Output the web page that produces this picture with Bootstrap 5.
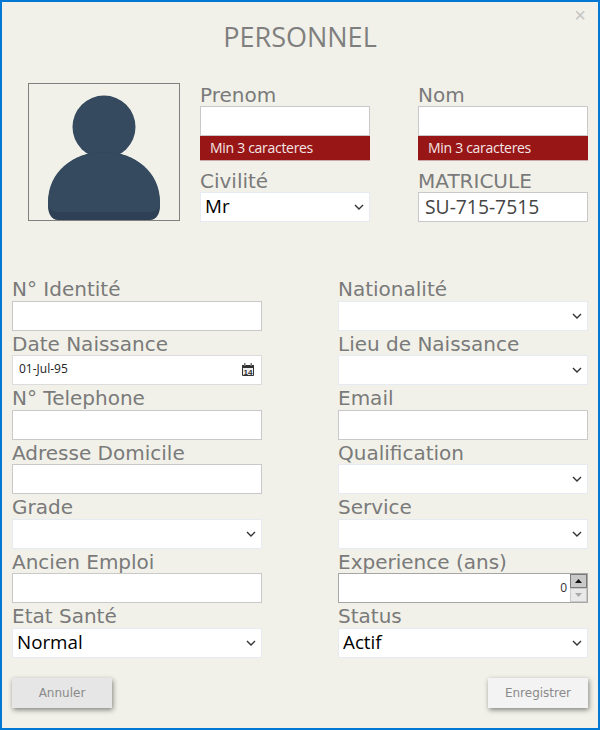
<!DOCTYPE html>
<html lang="fr">
<head>
    <meta charset="UTF-8">
    <title>Personnel</title>
    <link href="https://cdn.jsdelivr.net/npm/bootstrap@5.3.0/dist/css/bootstrap.min.css" rel="stylesheet">
    <style>
        html, body {
          height: 100%;
          background-color: #f1f1e9;
        }

        .fiche {
          height: 730px;
          border: 2px solid #0078d4;
          background-color: #f1f1e9;
          padding: 0 10px;
        }

        .fiche-head {
          height: 79.5px;
          position: relative;
        }

        .fiche-titre {
          font: 400 27px/70px "Open Sans", sans-serif;
          color: #7f7f7f;
          text-align: center;
          margin: 0;
        }

        .fiche-close {
          position: absolute;
          right: 2px;
          top: 6px;
          border: 0;
          background: none;
          padding: 0;
          font: 400 20px/14px "Liberation Sans", sans-serif;
          color: #c4c4c4;
        }

        .photo-box {
          width: 152px;
          height: 138px;
          margin: 1.5px 20px 0 16px;
          border: 1px solid #808080;
          flex: none;
        }

        .champ-top {
          width: 170px;
        }

        .champ-label {
          display: block;
          height: 24.5px;
          font: 400 20px/27.5px "DejaVu Sans", sans-serif;
          color: #7a7a7a;
          margin: 0;
          white-space: nowrap;
        }

        .champ-input.form-control {
          height: 30px;
          border-radius: 0;
          border: 1px solid #c9c9c9;
          background-color: #fff;
          padding: 0 6px 2px;
          font: 400 19.3px/26px "Open Sans", sans-serif;
          color: #444;
        }

        .champ-select.form-select {
          height: 30px;
          border-radius: 0;
          border: 1px solid #e6ebf2;
          padding: 0 24px 2px 4px;
          font: 400 18.8px/26px "Open Sans", sans-serif;
          color: #000;
          background-position: right 5px center;
          background-size: 10px 6px;
          background-image: url("data:image/svg+xml,%3csvg xmlns='http://www.w3.org/2000/svg' viewBox='0 0 10 6'%3e%3cpath fill='none' stroke='%23333' stroke-width='1.4' d='M1 1l4 4 4-4'/%3e%3c/svg%3e");
        }

        .msg-erreur {
          height: 25px;
          background-color: #981616;
          border-bottom: 1px solid #c9a9a9;
          color: #f3e6e6;
          font: 400 14px/24px "Open Sans", sans-serif;
          letter-spacing: -0.3px;
          padding-left: 10px;
          margin-bottom: 6.5px;
        }

        .fiche-grille {
          margin-top: 54.4px;
        }

        .colonne {
          width: 250px;
        }

        .date-champ,
        .spin-champ {
          position: relative;
        }

        .date-champ .champ-input.form-control {
          font-size: 12px;
          line-height: 24px;
          padding: 0 6px 4px;
          color: #222;
          border-color: #dcdcdc;
        }

        .date-icone {
          position: absolute;
          right: 8px;
          top: 8px;
        }

        .date-num {
          font: 700 8px "Liberation Sans", sans-serif;
          fill: #333;
        }

        .spin-champ .champ-input.form-control {
          border-color: #a6a6a6;
          text-align: right;
          padding-right: 20px;
          font-size: 12px;
          color: #333;
        }

        .spin-btn {
          position: absolute;
          right: 1px;
          width: 17px;
          height: 14px;
          padding: 0;
          display: flex;
          align-items: center;
          justify-content: center;
        }

        .spin-haut {
          top: 1px;
          background-color: #c9c9c9;
          border: 1px solid #7a7a7a;
        }

        .spin-bas {
          top: 15px;
          background-color: #e9e9e9;
          border: 1px solid #c9c9c9;
        }

        .fiche-actions {
          margin-top: 20.1px;
        }

        .btn-fiche {
          width: 100px;
          height: 30px;
          border: 0;
          border-radius: 0;
          padding: 0;
          font: 400 12px/30px "DejaVu Sans", sans-serif;
          color: #8a8a8a;
          box-shadow: 1px 2px 5px rgba(0, 0, 0, 0.45);
        }

        .btn-annuler {
          background-color: #e6e6e6;
        }

        .btn-enreg {
          background-color: #f3f3f3;
        }
    </style>
</head>
<body>

<div class="fiche">

    <!-- Title -->
    <div class="fiche-head">
        <h1 class="fiche-titre">PERSONNEL</h1>
        <button type="button" class="fiche-close" aria-label="Fermer">×</button>
    </div>

    <!-- Photo + identity -->
    <div class="d-flex">
        <div class="photo-box">
            <svg width="150" height="136" viewBox="0 0 150 136" class="d-block">
                <defs>
                    <filter id="flou" x="-5%" y="-5%" width="110%" height="110%">
                        <feGaussianBlur stdDeviation="0.7"/>
                    </filter>
                    <clipPath id="cadre"><rect width="150" height="136"/></clipPath>
                </defs>
                <g clip-path="url(#cadre)" filter="url(#flou)">
                    <circle cx="75" cy="43" r="31.5" fill="#34495e"/>
                    <path d="M19 122c0-34 25-54 56-54s56 20 56 54c0 8-4 14-10 14H29c-6 0-10-6-10-14z" fill="#2f4054"/>
                    <path d="M19 118c0-30 25-50 56-50s56 20 56 50c0 7-4 10-10 10H29c-6 0-10-3-10-10z" fill="#34495e"/>
                </g>
            </svg>
        </div>
        <div class="champ-top me-auto">
            <label class="champ-label">Prenom</label>
            <input type="text" class="form-control champ-input">
            <div class="msg-erreur">Min 3 caracteres</div>
            <label class="champ-label">Civilité</label>
            <select class="form-select champ-select"><option>Mr</option></select>
        </div>
        <div class="champ-top">
            <label class="champ-label">Nom</label>
            <input type="text" class="form-control champ-input">
            <div class="msg-erreur">Min 3 caracteres</div>
            <label class="champ-label">MATRICULE</label>
            <input type="text" class="form-control champ-input" value="SU-715-7515">
        </div>
    </div>

    <!-- Details -->
    <div class="fiche-grille d-flex justify-content-between">
        <div class="colonne">
            <label class="champ-label">N° Identité</label>
            <input type="text" class="form-control champ-input">
            <label class="champ-label">Date Naissance</label>
            <div class="date-champ">
                <input type="text" class="form-control champ-input" value="01-Jul-95">
                <svg class="date-icone" width="12" height="13" viewBox="0 0 12 13">
                    <path d="M.5 2.500h11v10H.5z" fill="#eee" stroke="#333"/>
                    <path d="M0 2h12v3H0z" fill="#333"/>
                    <path d="M2 0h1.500v3H2zM8.500 0H10v3H8.500z" fill="#777"/>
                    <text class="date-num" x="6" y="12" text-anchor="middle">14</text>
                </svg>
            </div>
            <label class="champ-label">N° Telephone</label>
            <input type="text" class="form-control champ-input">
            <label class="champ-label">Adresse Domicile</label>
            <input type="text" class="form-control champ-input">
            <label class="champ-label">Grade</label>
            <select class="form-select champ-select"><option></option></select>
            <label class="champ-label">Ancien Emploi</label>
            <input type="text" class="form-control champ-input">
            <label class="champ-label">Etat Santé</label>
            <select class="form-select champ-select"><option>Normal</option></select>
        </div>
        <div class="colonne">
            <label class="champ-label">Nationalité</label>
            <select class="form-select champ-select"><option></option></select>
            <label class="champ-label">Lieu de Naissance</label>
            <select class="form-select champ-select"><option></option></select>
            <label class="champ-label">Email</label>
            <input type="text" class="form-control champ-input">
            <label class="champ-label">Qualification</label>
            <select class="form-select champ-select"><option></option></select>
            <label class="champ-label">Service</label>
            <select class="form-select champ-select"><option></option></select>
            <label class="champ-label">Experience (ans)</label>
            <div class="spin-champ">
                <input type="text" class="form-control champ-input" value="0">
                <div class="spin-btn spin-haut">
                    <svg width="7" height="4" viewBox="0 0 7 4"><path d="M3.500 0L7 4H0z" fill="#111"/></svg>
                </div>
                <div class="spin-btn spin-bas">
                    <svg width="7" height="4" viewBox="0 0 7 4"><path d="M3.500 4L7 0H0z" fill="#aaa"/></svg>
                </div>
            </div>
            <label class="champ-label">Status</label>
            <select class="form-select champ-select"><option>Actif</option></select>
        </div>
    </div>

    <div class="fiche-actions d-flex justify-content-between">
        <button type="button" class="btn btn-fiche btn-annuler">Annuler</button>
        <button type="button" class="btn btn-fiche btn-enreg">Enregistrer</button>
    </div>
</div>

<script src="https://cdn.jsdelivr.net/npm/bootstrap@5.3.0/dist/js/bootstrap.bundle.min.js"></script>
</body>
</html>
